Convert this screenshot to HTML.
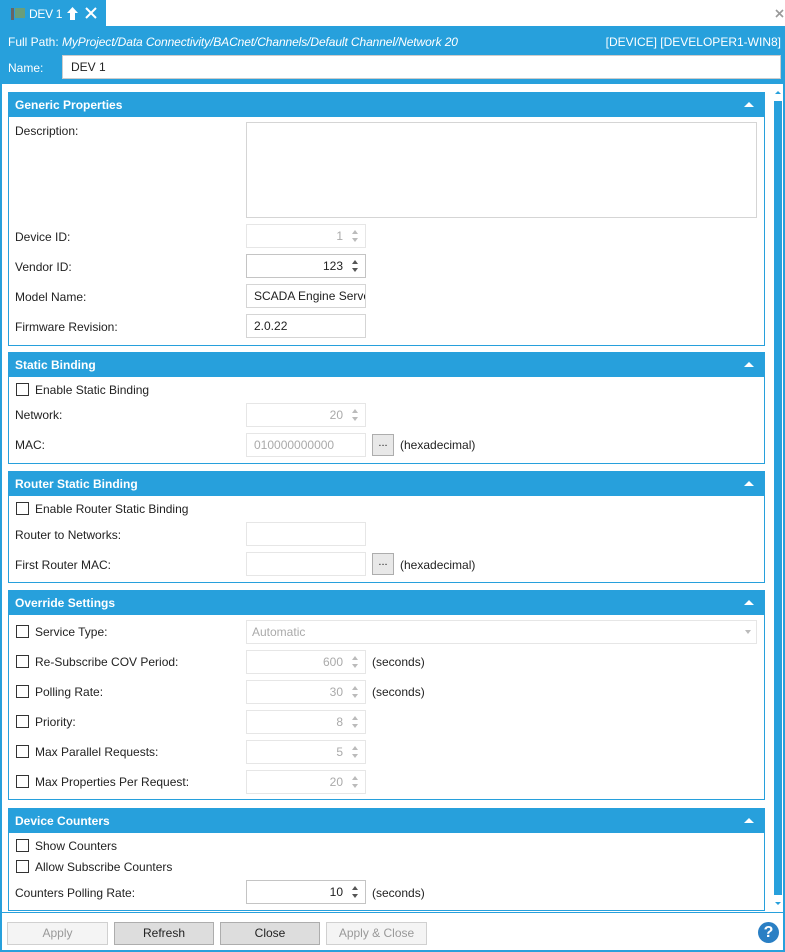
<!DOCTYPE html><html><head><style>
*{box-sizing:border-box;margin:0;padding:0}
body{width:785px;height:952px;position:relative;background:#fff;font-family:"Liberation Sans",sans-serif;font-size:12px;color:#222;overflow:hidden}
.a{position:absolute}
.p{position:absolute;left:8px;width:757px;border:1px solid #27a0dc;background:#fff}
.h{height:24px;background:#27a0dc;color:#fff;font-weight:bold;line-height:24px;padding-left:6px;position:relative}
.h:after{content:"";position:absolute;right:10px;top:9px;border-left:5px solid transparent;border-right:5px solid transparent;border-bottom:5px solid #fff}
.l{position:absolute;left:15px;line-height:14px}
.i{position:absolute;left:246px;width:120px;height:24px;border:1px solid #d5d5d5;line-height:22px;padding:0 7px;background:#fff;white-space:nowrap;overflow:hidden}
.d{border-color:#e6e6e6;color:#aaa;text-align:right;padding-right:22px}
.n{text-align:right;padding-right:22px;border-color:#c4c4c4}
.sp{position:absolute;right:6px;top:5px;width:7px;height:12px}
.sp:before{content:"";position:absolute;top:0;left:0;border-left:3.5px solid transparent;border-right:3.5px solid transparent;border-bottom:4px solid #bbb}
.sp:after{content:"";position:absolute;bottom:0;left:0;border-left:3.5px solid transparent;border-right:3.5px solid transparent;border-top:4px solid #bbb}
.n .sp:before{border-bottom-color:#555}.n .sp:after{border-top-color:#555}
.cb{position:absolute;left:16px;width:13px;height:13px;border:1px solid #333;background:#fff}
.ct{position:absolute;left:35px;line-height:14px}
.bt{position:absolute;top:922px;height:23px;border:1px solid #adadad;background:#ddd;text-align:center;line-height:21px}
.dis{background:#f4f4f4;border-color:#d0d0d0;color:#999}
.dot{position:absolute;left:372px;width:22px;height:22px;border:1px solid #adadad;background:#e8e8e8;text-align:center;line-height:16px;font-size:11px}
</style></head><body>
<!-- tab strip -->
<div class="a" style="left:0;top:0;width:106px;height:27px;background:#27a0dc"></div>
<div class="a" style="left:11px;top:8px;width:3px;height:12px;background:#666"></div>
<div class="a" style="left:15px;top:8px;width:10px;height:10px;background:#6a9e7a"></div>
<div class="a" style="left:29px;top:7px;color:#fff;font-size:12px;letter-spacing:-0.3px">DEV 1</div>
<svg class="a" style="left:66px;top:6px" width="13" height="15" viewBox="0 0 13 15"><path d="M6.5 1 L12 7 H9 V14 H4 V7 H1 Z" fill="#fff"/></svg>
<svg class="a" style="left:85px;top:7px" width="12" height="12"><path d="M1 1L11 11M11 1L1 11" stroke="#fff" stroke-width="2"/></svg>
<svg class="a" style="left:775px;top:9px" width="9" height="9"><path d="M1 1L8 8M8 1L1 8" stroke="#999" stroke-width="1.6"/></svg>
<!-- header -->
<div class="a" style="left:0;top:26px;width:785px;height:58px;background:#27a0dc"></div>
<div class="a" style="left:8px;top:35px;color:#fff">Full Path:</div>
<div class="a" style="left:62px;top:35px;color:#fff;font-style:italic;letter-spacing:-0.1px">MyProject/Data Connectivity/BACnet/Channels/Default Channel/Network 20</div>
<div class="a" style="right:4px;top:35px;color:#fff">[DEVICE] [DEVELOPER1-WIN8]</div>
<div class="a" style="left:8px;top:61px;color:#fff">Name:</div>
<div class="a" style="left:62px;top:55px;width:719px;height:24px;background:#fff;border:1px solid #ccc;padding-left:8px;line-height:22px">DEV 1</div>
<!-- frame -->
<div class="a" style="left:0;top:84px;width:2px;height:868px;background:#27a0dc"></div>
<div class="a" style="left:783px;top:84px;width:2px;height:868px;background:#27a0dc"></div>
<div class="a" style="left:0;top:950px;width:785px;height:2px;background:#27a0dc"></div>
<!-- scrollbar -->
<div class="a" style="left:775px;top:91px;border-left:3px solid transparent;border-right:3px solid transparent;border-bottom:3px solid #27a0dc"></div>
<div class="a" style="left:774px;top:101px;width:8px;height:794px;background:#27a0dc"></div>
<div class="a" style="left:775px;top:902px;border-left:3px solid transparent;border-right:3px solid transparent;border-top:3px solid #27a0dc"></div>

<!-- Panel 1 -->
<div class="p" style="top:92px;height:254px"><div class="h">Generic Properties</div></div>
<div class="l" style="top:124px">Description:</div>
<div class="i" style="top:122px;width:511px;height:96px"></div>
<div class="l" style="top:230px">Device ID:</div><div class="i d" style="top:224px">1<span class="sp"></span></div>
<div class="l" style="top:260px">Vendor ID:</div><div class="i n" style="top:254px">123<span class="sp"></span></div>
<div class="l" style="top:290px">Model Name:</div><div class="i" style="top:284px">SCADA Engine Server</div>
<div class="l" style="top:320px">Firmware Revision:</div><div class="i" style="top:314px">2.0.22</div>

<!-- Panel 2 -->
<div class="p" style="top:352px;height:112px"><div class="h">Static Binding</div></div>
<div class="cb" style="top:383px"></div><div class="ct" style="top:383px">Enable Static Binding</div>
<div class="l" style="top:408px">Network:</div><div class="i d" style="top:403px">20<span class="sp"></span></div>
<div class="l" style="top:438px">MAC:</div><div class="i d" style="top:433px;text-align:left;padding-left:7px">010000000000</div>
<div class="dot" style="top:434px">...</div><div class="a" style="left:400px;top:438px">(hexadecimal)</div>

<!-- Panel 3 -->
<div class="p" style="top:471px;height:112px"><div class="h">Router Static Binding</div></div>
<div class="cb" style="top:502px"></div><div class="ct" style="top:502px">Enable Router Static Binding</div>
<div class="l" style="top:528px">Router to Networks:</div><div class="i d" style="top:522px"></div>
<div class="l" style="top:558px">First Router MAC:</div><div class="i d" style="top:552px"></div>
<div class="dot" style="top:553px">...</div><div class="a" style="left:400px;top:558px">(hexadecimal)</div>

<!-- Panel 4 -->
<div class="p" style="top:590px;height:210px"><div class="h">Override Settings</div></div>
<div class="cb" style="top:625px"></div><div class="ct" style="top:625px">Service Type:</div>
<div class="i d" style="top:620px;width:511px;text-align:left;padding-left:5px">Automatic</div>
<div class="a" style="left:745px;top:630px;border-left:3.5px solid transparent;border-right:3.5px solid transparent;border-top:4px solid #bbb"></div>
<div class="cb" style="top:655px"></div><div class="ct" style="top:655px">Re-Subscribe COV Period:</div><div class="i d" style="top:650px">600<span class="sp"></span></div><div class="a" style="left:372px;top:655px">(seconds)</div>
<div class="cb" style="top:685px"></div><div class="ct" style="top:685px">Polling Rate:</div><div class="i d" style="top:680px">30<span class="sp"></span></div><div class="a" style="left:372px;top:685px">(seconds)</div>
<div class="cb" style="top:715px"></div><div class="ct" style="top:715px">Priority:</div><div class="i d" style="top:710px">8<span class="sp"></span></div>
<div class="cb" style="top:745px"></div><div class="ct" style="top:745px">Max Parallel Requests:</div><div class="i d" style="top:740px">5<span class="sp"></span></div>
<div class="cb" style="top:775px"></div><div class="ct" style="top:775px">Max Properties Per Request:</div><div class="i d" style="top:770px">20<span class="sp"></span></div>

<!-- Panel 5 -->
<div class="p" style="top:808px;height:103px"><div class="h">Device Counters</div></div>
<div class="cb" style="top:839px"></div><div class="ct" style="top:839px">Show Counters</div>
<div class="cb" style="top:860px"></div><div class="ct" style="top:860px">Allow Subscribe Counters</div>
<div class="l" style="top:886px">Counters Polling Rate:</div><div class="i n" style="top:880px">10<span class="sp"></span></div><div class="a" style="left:372px;top:886px">(seconds)</div>

<!-- bottom -->
<div class="a" style="left:0;top:912px;width:785px;height:1px;background:#27a0dc"></div>
<div class="bt dis" style="left:7px;width:101px">Apply</div>
<div class="bt" style="left:114px;width:100px">Refresh</div>
<div class="bt" style="left:220px;width:100px">Close</div>
<div class="bt dis" style="left:326px;width:101px">Apply &amp; Close</div>
<div class="a" style="left:758px;top:922px;width:21px;height:21px;border-radius:50%;background:#2a7fc4;color:#fff;font-weight:bold;font-size:16px;text-align:center;line-height:21px">?</div>
</body></html>
